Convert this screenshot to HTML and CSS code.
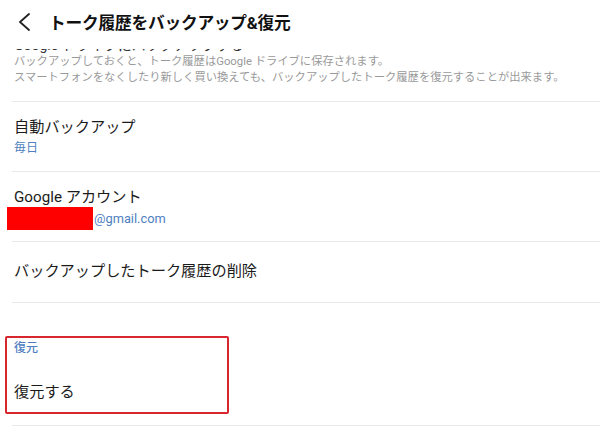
FILE: index.html
```html
<!DOCTYPE html>
<html lang="ja">
<head>
  <meta charset="UTF-8" />
  <meta name="viewport" content="width=device-width, initial-scale=1.0"/>
  <title>トーク履歴をバックアップ&amp;復元</title>
  <link rel="stylesheet" href="styles.css">
</head>
<body>
  <header class="topbar">
    <svg class="back" width="13" height="18" viewBox="0 0 13 18">
      <path d="M11 1 L2 9 L11 17" fill="none" stroke="#222" stroke-width="1.8" stroke-linecap="round" stroke-linejoin="round"/>
    </svg>
    <h1>トーク履歴をバックアップ&amp;復元</h1>
  </header>

  <main class="list">
    <!-- 上にスクロールされて見出しが半分隠れている -->
    <div class="intro">
      <p class="intro-title">Google ドライブにバックアップする</p>
      <p class="intro-desc">バックアップしておくと、トーク履歴はGoogle ドライブに保存されます。</p>
      <p class="intro-desc">スマートフォンをなくしたり新しく買い換えても、バックアップしたトーク履歴を復元することが出来ます。</p>
    </div>

    <div class="item">
      <div class="item-title">自動バックアップ</div>
      <div class="item-sub">毎日</div>
    </div>

    <div class="item item-account">
      <div class="item-title">Google アカウント</div>
      <div class="item-sub account-row"><span class="redact"></span>@gmail.com</div>
    </div>

    <div class="item item-single">
      <div class="item-title">バックアップしたトーク履歴の削除</div>
    </div>

    <section class="group">
      <div class="group-label">復元</div>
      <div class="item item-restore">
        <div class="item-title">復元する</div>
      </div>
      <div class="mark"></div>
    </section>
  </main>
</body>
</html>
```

FILE: styles.css
```css
body{margin:0;background:#fff;font-family:Roboto,"Noto Sans CJK JP",sans-serif;color:#1b1b1b;overflow:hidden;}
p{margin:0;}

.topbar{position:relative;z-index:1;height:43px;padding:0 0 6px 18px;display:flex;align-items:center;background:#fff;}
.back{margin-right:18px;flex:none;margin-top:1px;}
.topbar h1{margin:0;font-size:16.7px;font-weight:700;letter-spacing:-0.2px;color:#111;}

.list{margin-top:-13px;padding-left:12px;}

.intro{padding:0 0 15px 2px;border-bottom:1px solid #e9e9e9;}
.intro-title{font-size:14px;line-height:18px;color:#333;}
.intro-desc{font-size:11.3px;line-height:16px;color:#9a9a9a;white-space:nowrap;}

.item{padding:15px 0 15px 2px;border-bottom:1px solid #e9e9e9;}
.item-title{font-size:15.2px;line-height:20px;}
.item-sub{margin-top:3px;font-size:12px;line-height:16px;color:#4f7fbf;}

.item-account{padding-bottom:11px;}
.account-row{margin-top:0;height:23px;display:flex;align-items:center;font-size:12.8px;}
.redact{display:inline-block;width:86px;height:23px;margin-left:-7px;margin-right:1px;background:#ff0000;}

.item-single{padding:19px 0 21px 2px;}

.group{position:relative;}
.group-label{padding:37px 0 0 2px;font-size:12px;line-height:16px;color:#4f7fbf;font-weight:500;}
.item-restore{padding:26px 0 23px 2px;}

/* 赤枠の注釈 */
.mark{position:absolute;left:-7px;top:33px;width:220px;height:74px;border:2px solid #d7262e;border-radius:2px;}
```
